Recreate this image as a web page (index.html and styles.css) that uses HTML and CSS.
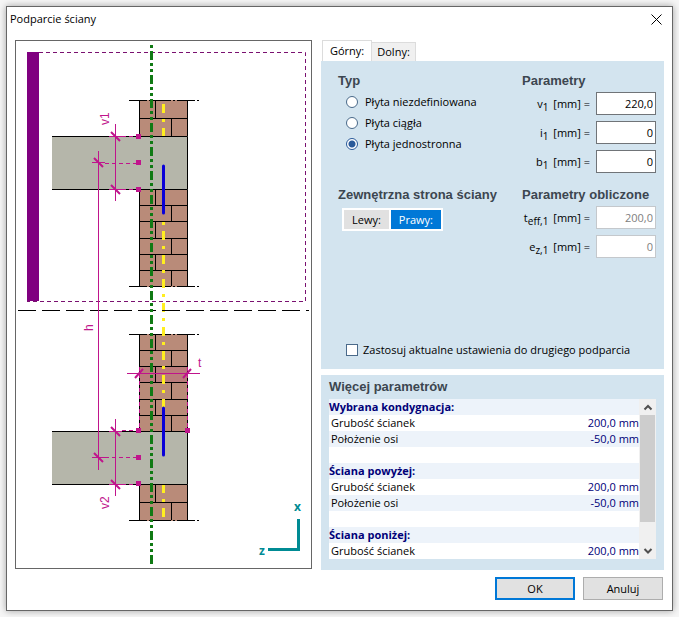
FILE: index.html
```html
<!DOCTYPE html>
<html lang="pl">
<head>
    <meta charset="UTF-8">
    <meta name="viewport" content="width=device-width, initial-scale=1.0">
    <title>Podparcie ściany</title>
    <link rel="stylesheet" href="styles.css">
</head>
<body>
<form class="dialog">
    <div class="titlebar">
        <h1>Podparcie ściany</h1>
        <button type="button" class="close" aria-label="Zamknij">
            <svg width="11" height="11" viewBox="0 0 11 11"><path d="M0.5 0.5L10.5 10.5M10.5 0.5L0.5 10.5" stroke="#000" fill="none"/></svg>
        </button>
    </div>

    <div class="content">
        <div class="drawing">
            <svg viewBox="16 41 295 527" role="img" aria-label="Schemat podparcia">
                <!-- outer side -->
                <rect x="27" y="52" width="12" height="249" fill="#800080"/>
                <path class="side" d="M39 52.5H305.5V301.5H27"/>

                <!-- walls -->
                <g class="brick">
                    <rect x="139" y="100" width="49" height="37"/>
                    <rect x="139" y="189" width="49" height="98"/>
                    <rect x="139" y="334" width="49" height="98"/>
                    <rect x="139" y="484" width="49" height="37"/>
                </g>
                <rect x="139" y="367" width="49" height="15" fill="#c8148c" opacity="0.12"/>
                <path class="line" d="M139.5 100V137M187.5 100V137M139 118.5H188M155.5 100V118M171.5 118V137"/>
                <path class="line" d="M139.5 189V287M187.5 189V287M139 205.5H188M139 221.5H188M139 238.5H188M139 254.5H188M139 270.5H188M155.5 189V205M171.5 205V221M155.5 221V238M171.5 238V254M155.5 254V270M171.5 270V286"/>
                <path class="line" d="M139.5 334V432M187.5 334V432M139 350.5H188M139 366.5H188M139 382.5H188M139 399.5H188M139 415.5H188M155.5 334V350M171.5 350V366M155.5 366V382M171.5 382V399M155.5 399V415M171.5 415V431"/>
                <path class="line" d="M139.5 484V521M187.5 484V521M139 502.5H188M155.5 484V502M171.5 502V520"/>
                <path class="line break" d="M129 100.5H199M129 286.5H199M129 334.5H199M129 520.5H199"/>

                <!-- axis of the wall -->
                <path class="axis yellow" d="M163.5 104V137M163.5 484V520"/>
                <path class="axis yellow" stroke-dashoffset="9" d="M163.5 216V408"/>

                <!-- slabs -->
                <rect x="52" y="136" width="136" height="54" fill="#b5b6aa"/>
                <rect x="52" y="431" width="136" height="54" fill="#b5b6aa"/>
                <path class="line" d="M52 136.5H187.5V189.5H52M52 431.5H187.5V484.5H52"/>

                <path class="line level" d="M18 310.5H309"/>
                <path class="axis green" d="M151.5 45V564"/>
                <path class="axis blue" d="M163.5 166V213M163.5 408V455"/>

                <!-- dimensions -->
                <path class="dim" d="M115.5 124V201M98.5 151V470M115.5 419V496M127 373.5H200"/>
                <path class="dim" d="M109 136.5H122M109 189.5H122M92 162.5H105M109 431.5H122M109 484.5H122M92 457.5H105"/>
                <path class="dim dashed" d="M122 136.5H136M122 189.5H136M105 163.5H136M122 430.5H136M122 484.5H136M105 457.5H136M139.5 367V428M187.5 367V428"/>
                <path class="tick" d="M111 132L120 141M111 185L120 194M94 158L103 167M111 427L120 436M111 480L120 489M94 453L103 462M135 378L143 369M183 378L191 369"/>
                <path fill="#c0148c" d="M136 134h5v5h-5zM136 160h5v5h-5zM136 187h5v5h-5zM136 428h5v5h-5zM136 455h5v5h-5zM136 481h5v5h-5zM185 428h5v5h-5z"/>
                <g class="dim-text">
                    <text transform="translate(109 125) rotate(-90)">v1</text>
                    <text transform="translate(93 331) rotate(-90)">h</text>
                    <text transform="translate(109 509) rotate(-90)">v2</text>
                    <text x="198" y="367">t</text>
                </g>

                <!-- coordinate system -->
                <path d="M298.5 519V549.5H268" stroke="#008b94" stroke-width="3" fill="none"/>
                <text class="axis-text" x="294" y="511">x</text>
                <text class="axis-text" x="259" y="555">z</text>
            </svg>
        </div>

        <div class="side-column">
            <div>
                <div class="tabs" role="tablist">
                    <button type="button" role="tab" aria-selected="true" class="tab active">Górny:</button>
                    <button type="button" role="tab" aria-selected="false" class="tab">Dolny:</button>
                </div>
                <div class="panel settings" role="tabpanel">
                    <section class="group">
                        <h2>Typ</h2>
                        <div class="options">
                            <label><input type="radio" name="type"> Płyta niezdefiniowana</label>
                            <label><input type="radio" name="type"> Płyta ciągła</label>
                            <label><input type="radio" name="type" checked> Płyta jednostronna</label>
                        </div>
                    </section>
                    <section class="group">
                        <h2>Parametry</h2>
                        <div class="fields">
                            <label for="v1">v<sub>1</sub> [mm] =</label><input type="text" id="v1" value="220,0">
                            <label for="i1">i<sub>1</sub> [mm] =</label><input type="text" id="i1" value="0">
                            <label for="b1">b<sub>1</sub> [mm] =</label><input type="text" id="b1" value="0">
                        </div>
                    </section>
                    <section class="group">
                        <h2>Zewnętrzna strona ściany</h2>
                        <div class="toggle">
                            <button type="button" aria-pressed="false">Lewy:</button>
                            <button type="button" aria-pressed="true" class="on">Prawy:</button>
                        </div>
                    </section>
                    <section class="group">
                        <h2>Parametry obliczone</h2>
                        <div class="fields">
                            <label for="teff">t<sub>eff,1</sub> [mm] =</label><input type="text" id="teff" value="200,0" disabled>
                            <label for="ez">e<sub>z,1</sub> [mm] =</label><input type="text" id="ez" value="0" disabled>
                        </div>
                    </section>
                    <label class="apply"><input type="checkbox"> Zastosuj aktualne ustawienia do drugiego podparcia</label>
                </div>
            </div>

            <div class="panel more">
                <h2>Więcej parametrów</h2>
                <div class="list">
                    <table>
                        <tr><th colspan="2">Wybrana kondygnacja:</th></tr>
                        <tr><td>Grubość ścianek</td><td>200,0 mm</td></tr>
                        <tr><td>Położenie osi</td><td>-50,0 mm</td></tr>
                        <tr><td colspan="2"></td></tr>
                        <tr><th colspan="2">Ściana powyżej:</th></tr>
                        <tr><td>Grubość ścianek</td><td>200,0 mm</td></tr>
                        <tr><td>Położenie osi</td><td>-50,0 mm</td></tr>
                        <tr><td colspan="2"></td></tr>
                        <tr><th colspan="2">Ściana poniżej:</th></tr>
                        <tr><td>Grubość ścianek</td><td>200,0 mm</td></tr>
                    </table>
                    <div class="scrollbar" aria-hidden="true">
                        <svg width="16" height="16" viewBox="0 0 16 16"><path d="M4.5 10.5L8 7L11.5 10.5"/></svg>
                        <div class="thumb"></div>
                        <svg width="16" height="16" viewBox="0 0 16 16"><path d="M4.5 6L8 9.5L11.5 6"/></svg>
                    </div>
                </div>
            </div>
        </div>
    </div>

    <div class="actions">
        <button type="submit" class="btn primary">OK</button>
        <button type="button" class="btn">Anuluj</button>
    </div>
</form>
</body>
</html>
```

FILE: styles.css
```css
* {
    box-sizing: border-box;
}
body {
    margin: 0;
    padding: 6px;
    background: #f6f6f6;
    font: 11px/16px "Open Sans", "Noto Sans", sans-serif;
    color: #000;
}
button, input {
    font: inherit;
    color: inherit;
}
h1, h2 {
    margin: 0;
}
h2 {
    font: bold 13px/16px "Liberation Sans", Arial, sans-serif;
    color: #3c4650;
}

.dialog {
    padding: 0 8px 10px;
    background: #fff;
    border: 1px solid #666;
    box-shadow: 0 0 7px rgba(0, 0, 0, 0.35);
}
.titlebar {
    display: flex;
    justify-content: space-between;
    align-items: center;
    height: 33px;
    padding-bottom: 9px;
    margin-left: -5px;
}
.titlebar h1 {
    font-size: 11px;
    font-weight: normal;
}
.close {
    display: flex;
    padding: 2px;
    border: none;
    background: none;
}

.content {
    display: grid;
    grid-template-columns: 297fr 343fr;
    gap: 9px;
}
.drawing {
    align-self: start;
    border: 1px solid #666;
}
.drawing svg {
    display: block;
    width: 100%;
}
.side-column {
    display: flex;
    flex-direction: column;
    gap: 6px;
}

/* drawing */
.side {
    fill: none;
    stroke: #7a1070;
    stroke-dasharray: 4 3;
}
.brick {
    fill: #b98b79;
}
.line {
    fill: none;
    stroke: #000;
}
.break {
    stroke-dasharray: 18 2 2 2;
}
.level {
    stroke-dasharray: 18 6;
}
.axis {
    fill: none;
    stroke-width: 3;
}
.yellow {
    stroke: #ffee20;
    stroke-dasharray: 9 6 3 6;
}
.green {
    stroke: #107a14;
    stroke-dasharray: 9 3 3 3 3 3;
    stroke-dashoffset: 18;
}
.blue {
    stroke: #0a00d8;
    stroke-linecap: round;
}
.dim, .tick {
    fill: none;
    stroke: #c0148c;
}
.dashed {
    stroke-dasharray: 4 3;
}
.tick {
    stroke-width: 2;
}
.dim-text {
    font: 12px "Liberation Sans", Arial, sans-serif;
    fill: #c0148c;
}
.axis-text {
    font: bold 12px "Open Sans", sans-serif;
    fill: #008b94;
}

/* tabs */
.tabs {
    display: flex;
    align-items: flex-end;
    height: 21px;
    padding-left: 1px;
}
.tab {
    height: 19px;
    padding: 0 5px;
    border: 1px solid #dcdcdc;
    border-width: 1px 1px 0 0;
    background: #f0f0f0;
}
.tab.active {
    height: 21px;
    padding: 0 7px;
    border-left-width: 1px;
    background: #fff;
}

.panel {
    background: #d3e4ef;
}
.settings {
    display: grid;
    grid-template-columns: 1fr 134px;
    grid-template-rows: 114px 1fr auto;
    column-gap: 8px;
    min-height: 308px;
    padding: 12px 8px 11px 17px;
}
.options {
    display: flex;
    flex-direction: column;
    gap: 5px;
    padding: 5px 8px;
}
.options label, .apply {
    display: flex;
    align-items: center;
    gap: 7px;
}
.apply {
    grid-column: 1 / -1;
    gap: 5px;
    padding-left: 8px;
}
input[type="radio"], input[type="checkbox"] {
    appearance: none;
    flex: none;
    width: 12px;
    height: 12px;
    margin: 0;
    border: 1px solid #4a6a8a;
    background: #fff;
}
input[type="radio"] {
    border-radius: 50%;
}
input[type="radio"]:checked {
    border-color: #2a5a9a;
    background: radial-gradient(circle, #2a5a9a 3px, #fff 4px);
}

.fields {
    display: grid;
    grid-template-columns: 1fr 60px;
    align-items: center;
    gap: 6px;
    margin-top: 3px;
    text-align: right;
    white-space: nowrap;
}
.fields sub {
    margin-right: 2px;
    font-size: 10px;
    line-height: 0;
}
.fields input {
    width: 100%;
    height: 23px;
    padding: 0 2px;
    border: 1px solid #707478;
    background: #fff;
    text-align: right;
}
.fields input:disabled {
    border-color: #c4c8cc;
    color: #808080;
}

.toggle {
    display: inline-flex;
    gap: 2px;
    margin: 5px 4px;
    padding: 2px;
    background: #fff;
}
.toggle button {
    height: 19px;
    padding: 0 8px;
    border: none;
    background: #e1e1e1;
}
.toggle .on {
    background: #0078d7;
    color: #fff;
}

/* parameter list */
.more {
    padding: 4px 8px 11px;
}
.list {
    display: flex;
    margin-top: 4px;
    background: #fff;
}
.list table {
    flex: 1;
    border-collapse: collapse;
}
.list tr {
    height: 16px;
}
.list tr:nth-child(odd) {
    background: #edf3fa;
}
.list th, .list td {
    padding: 0 0 1px 2px;
    line-height: 15px;
    text-align: left;
}
.list th {
    padding-left: 0;
    font-weight: bold;
    color: #000078;
}
.list td + td {
    text-align: right;
    color: #000078;
}
.scrollbar {
    display: flex;
    flex-direction: column;
    justify-content: space-between;
    width: 17px;
    padding-left: 1px;
    background: #f0f0f0;
}
.scrollbar path {
    fill: none;
    stroke: #505050;
    stroke-width: 2;
}
.thumb {
    width: 15px;
    height: 107px;
    margin-bottom: auto;
    background: #cdcdcd;
}

.actions {
    display: flex;
    justify-content: flex-end;
    gap: 8px;
    margin-top: 7px;
    padding-right: 1px;
}
.btn {
    width: 80px;
    height: 23px;
    padding: 0;
    border: 1px solid #adadad;
    background: #e1e1e1;
}
.btn.primary {
    border: 2px solid #0078d7;
}
```
